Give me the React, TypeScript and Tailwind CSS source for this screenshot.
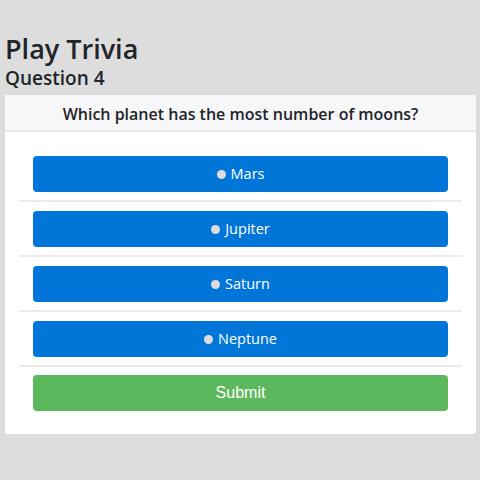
import React, { useState } from "react";

const options = ["Mars", "Jupiter", "Saturn", "Neptune"];

const App = () => {
  const [picked, setPicked] = useState<string | null>(null);

  return (
    <div className="min-h-[480px] w-[480px] bg-[#dddddd] pt-[32px] font-['Open_Sans',sans-serif] text-[#212529]">
      <h1 className="pl-[5px] text-[27px] font-semibold leading-[34px]">Play Trivia</h1>
      <h2 className="pl-[5px] text-[19px] font-semibold leading-[24px]">Question 4</h2>
      <div className="mx-[5px] mt-[5px] w-[471px] rounded-[3px] bg-white">
        <div className="h-[37px] border-b-2 border-[#e9e9ec] bg-[#f7f7f9] pt-[2px] text-center text-[16px] font-semibold leading-[35px]">
          Which planet has the most number of moons?
        </div>
        <ul className="px-[14px] pt-[24px]">
          {options.map((o) => (
            <li key={o} className="border-b-2 border-[#ebebeb] px-[14px] pb-[8px] pt-[9px] first:pt-0">
              <button
                onClick={() => setPicked(o)}
                className="flex h-[36px] w-full items-center justify-center gap-[5px] rounded-[4px] bg-[#0275d8] text-[14.5px] text-white"
              >
                <span
                  className={
                    picked === o
                      ? "h-[9px] w-[9px] rounded-full border-[3px] border-[#dddddd] bg-[#0275d8]"
                      : "h-[9px] w-[9px] rounded-full bg-[#dddddd]"
                  }
                />
                {o}
              </button>
            </li>
          ))}
        </ul>
        <div className="px-[28px] pb-[23px] pt-[8px]">
          <button className="h-[36px] w-full rounded-[4px] bg-[#5cb85c] font-['Liberation_Sans',sans-serif] text-[16px] text-white">
            Submit
          </button>
        </div>
      </div>
    </div>
  );
};

export default App;
